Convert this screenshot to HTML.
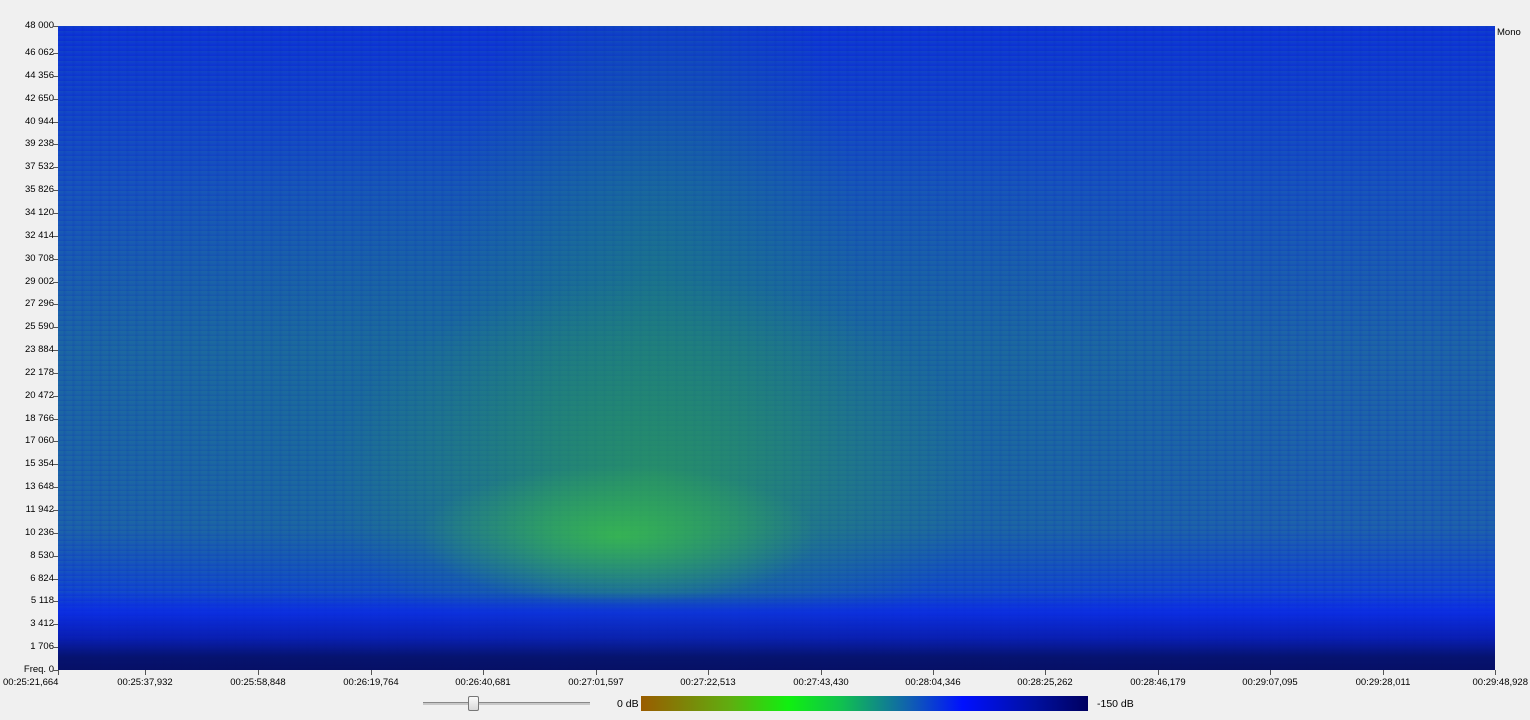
<!DOCTYPE html>
<html><head><style>
html,body{margin:0;padding:0;width:1530px;height:720px;background:#f0f0f0;overflow:hidden;font-family:"Liberation Sans",sans-serif;font-size:9.5px;color:#000}
#plot{position:absolute;left:58px;top:26px;width:1437px;height:644px;
background:
 linear-gradient(to bottom, rgba(0,0,0,0) 0%, rgba(0,0,0,0) 88%, rgba(10,40,230,.75) 91%, rgba(8,24,170,.8) 95%, rgba(5,15,100,.9) 98%, rgba(5,12,90,.9) 100%),
 radial-gradient(ellipse 200px 70px at 560px 510px, rgba(70,220,50,.55), rgba(70,220,50,0)),
 radial-gradient(ellipse 330px 200px at 600px 450px, rgba(50,170,70,.5), rgba(50,170,70,0)),
 radial-gradient(ellipse 200px 400px at 600px 250px, rgba(30,150,90,.3), rgba(30,150,90,0)),
 radial-gradient(ellipse 700px 330px at 560px 400px, rgba(20,130,110,.35), rgba(20,130,110,0)),
 repeating-linear-gradient(to right, rgba(0,0,0,0) 0px, rgba(0,0,0,0) 5px, rgba(0,40,180,.15) 6px, rgba(0,0,0,0) 9px),
 repeating-linear-gradient(to bottom, rgba(40,140,120,.15) 0px, rgba(0,0,0,0) 3px, rgba(0,0,180,.12) 5px),
 linear-gradient(to bottom, #0c32d8 0%, #1650c0 25%, #1c62aa 50%, #1c5eb0 78%, #1040d8 88%, #0c30e0 100%);}
.yl{position:absolute;right:1476px;width:60px;text-align:right;line-height:10px}
.yt{position:absolute;left:53px;width:5px;height:1px;background:#555}
.xl{position:absolute;top:677px;width:90px;margin-left:-45px;text-align:center}
.xt{position:absolute;top:670px;width:1px;height:5px;background:#555}
</style></head><body>
<div id="plot"></div>
<div style="position:absolute;left:1497px;top:27px">Mono</div>
<div id="ax"></div>
<div style="position:absolute;left:423px;top:702px;width:167px;height:2px;background:#c8c8c8;border-top:1px solid #888"></div>
<div style="position:absolute;left:468px;top:696px;width:11px;height:15px;background:linear-gradient(#fafafa,#d8d8d8);border:1px solid #777;border-radius:2px;box-sizing:border-box"></div>
<div style="position:absolute;left:617px;top:698px;font-size:10.5px">0 dB</div>
<div style="position:absolute;left:641px;top:696px;width:447px;height:15px;background:linear-gradient(to right,#9a5c00 0%,#5fae10 20%,#10f010 33%,#10c050 45%,#1060b0 60%,#0010ff 72%,#0010a0 88%,#000060 100%)"></div>
<div style="position:absolute;left:1097px;top:698px;font-size:10.5px">-150 dB</div>
<script>
var y=["48 000","46 062","44 356","42 650","40 944","39 238","37 532","35 826","34 120","32 414","30 708","29 002","27 296","25 590","23 884","22 178","20 472","18 766","17 060","15 354","13 648","11 942","10 236","8 530","6 824","5 118","3 412","1 706","Freq. 0"];
var h="";
for(var i=0;i<y.length;i++){var p=i==0?26:(i==y.length-1?670:53+(i-1)*22.85);
h+='<div class="yl" style="top:'+(p-5)+'px">'+y[i]+'</div><div class="yt" style="top:'+Math.round(p)+'px"></div>';}
var x=["00:25:21,664","00:25:37,932","00:25:58,848","00:26:19,764","00:26:40,681","00:27:01,597","00:27:22,513","00:27:43,430","00:28:04,346","00:28:25,262","00:28:46,179","00:29:07,095","00:29:28,011","00:29:48,928"];
var xs=[58,145,258,371,483,596,708,821,933,1045,1158,1270,1383,1495];
for(var j=0;j<x.length;j++){var l=xs[j];var st=j==0?'left:3px;margin-left:0;text-align:left':(j==x.length-1?'left:1440px;margin-left:0;text-align:right;width:88px':'left:'+l+'px');
h+='<div class="xl" style="'+st+'">'+x[j]+'</div><div class="xt" style="left:'+l+'px"></div>';}
document.getElementById('ax').innerHTML=h;
</script>
</body></html>
